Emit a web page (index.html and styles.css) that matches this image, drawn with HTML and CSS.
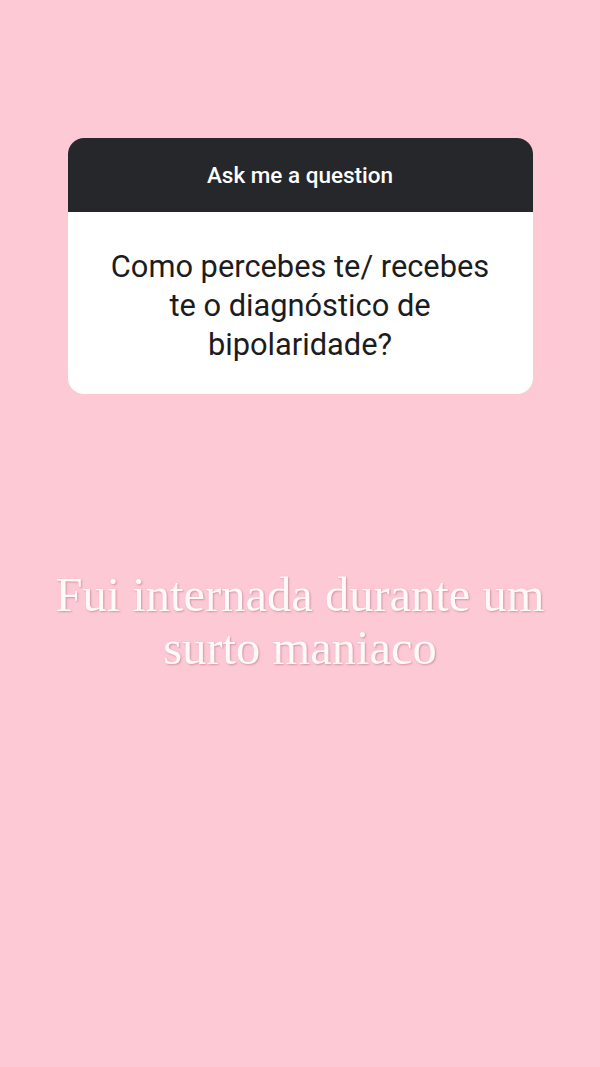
FILE: index.html
```html
<!DOCTYPE html>
<html>
<head>
<meta charset="utf-8">
<link rel="stylesheet" href="styles.css">
</head>
<body>
<div class="page">
  <div class="card">
    <div class="card-head">Ask me a question</div>
    <div class="card-body">Como percebes te/ recebes<br>te o diagnóstico de<br>bipolaridade?</div>
  </div>
  <div class="answer">Fui internada durante um<br>surto maniaco</div>
</div>
</body>
</html>
```
FILE: styles.css
```css
html, body {
  margin: 0;
  padding: 0;
}
body {
  width: 600px;
  height: 1067px;
  background: #fdc9d4;
  overflow: hidden;
}
.page {
  display: flex;
  flex-direction: column;
  align-items: center;
  padding-top: 138px;
}
.card {
  width: 465px;
  border-radius: 16px;
  overflow: hidden;
  background: #ffffff;
}
.card-head {
  height: 74px;
  background: #26272b;
  color: #ffffff;
  font-family: Roboto, "Liberation Sans", sans-serif;
  font-weight: 500;
  font-size: 22.5px;
  display: flex;
  align-items: center;
  justify-content: center;
}
.card-body {
  height: 182px;
  box-sizing: border-box;
  padding: 4px 20px 0;
  display: flex;
  align-items: center;
  justify-content: center;
  text-align: center;
  font-family: Roboto, "Liberation Sans", sans-serif;
  font-size: 30.8px;
  line-height: 39px;
  color: #1c1c1e;
}
.answer {
  margin-top: 174px;
  font-family: "Liberation Serif", serif;
  font-size: 48.5px;
  line-height: 53px;
  color: #fffafa;
  text-align: center;
  text-shadow: 1px 1px 2px rgba(170, 110, 120, 0.55);
}
```
